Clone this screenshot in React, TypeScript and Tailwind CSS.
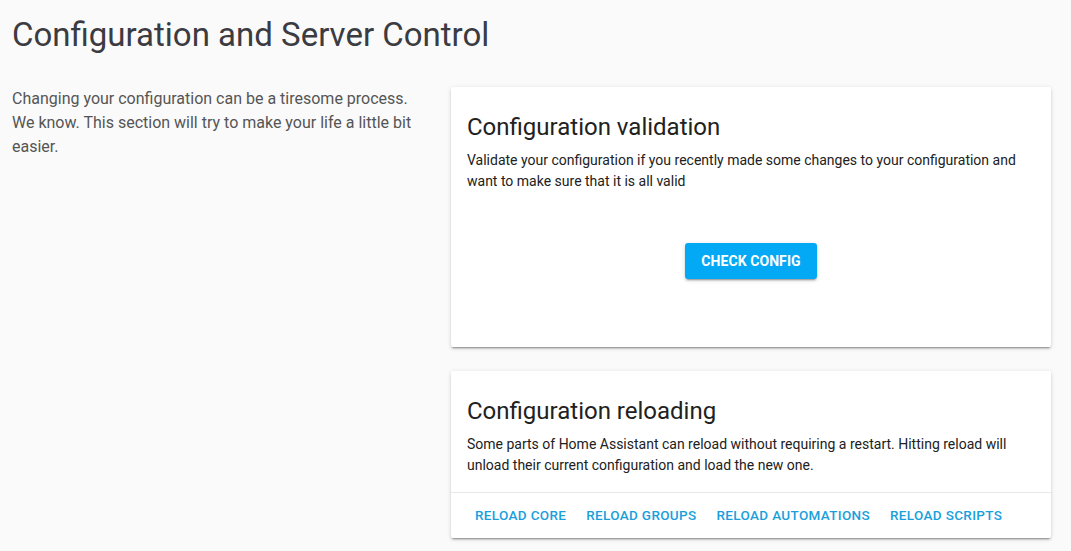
import React from "react";

const shadow =
  "shadow-[0_2px_2px_0_rgba(0,0,0,0.14),0_1px_5px_0_rgba(0,0,0,0.12),0_3px_1px_-2px_rgba(0,0,0,0.2)]";

const reloadActions = ["Reload Core", "Reload Groups", "Reload Automations", "Reload Scripts"];

export default function App() {
  return (
    <div className="min-h-screen bg-[#fafafa] font-['Roboto','Liberation_Sans',sans-serif]">
      <h1 className="px-3 pt-[15px] text-[33px] leading-[40px] font-normal text-[#3b3b42]">
        Configuration and Server Control
      </h1>

      <div className="flex pl-3 mt-8">
        <div className="w-[400px] mr-[39px] text-[16px] leading-[24px] text-[#555]">
          Changing your configuration can be a tiresome process. We know. This section will try
          to make your life a little bit easier.
        </div>

        <div className="w-[600px] flex flex-col gap-6">
          {/* validation card */}
          <div className={`bg-white rounded-[2px] ${shadow} px-4 pt-6 pb-[68px]`}>
            <h2 className="text-[24px] leading-[32px] font-normal text-[#212121]">
              Configuration validation
            </h2>
            <p className="mt-[7px] text-[14px] leading-[21px] text-[#212121]">
              Validate your configuration if you recently made some changes to your configuration
              and want to make sure that it is all valid
            </p>
            <div className="mt-[51px] flex justify-center">
              <button
                className={`h-9 w-[132px] whitespace-nowrap rounded-[3px] bg-[#03a9f4] text-white text-[14px] font-bold uppercase tracking-[0.005em] ${shadow}`}
              >
                Check Config
              </button>
            </div>
          </div>

          {/* reloading card */}
          <div className={`bg-white rounded-[2px] ${shadow}`}>
            <div className="px-4 pt-6 pb-4">
              <h2 className="text-[24px] leading-[32px] font-normal text-[#212121]">
                Configuration reloading
              </h2>
              <p className="mt-[7px] text-[14px] leading-[21px] text-[#212121]">
                Some parts of Home Assistant can reload without requiring a restart. Hitting reload
                will unload their current configuration and load the new one.
              </p>
            </div>
            <div className="flex border-t border-[#e8e8e8] pl-[14px] pt-1 pb-[5px]">
              {reloadActions.map((a) => (
                <button
                  key={a}
                  className="h-9 shrink-0 whitespace-nowrap px-[10px] text-[13.5px] font-medium uppercase tracking-[0.025em] text-[#1a9fdc]"
                >
                  {a}
                </button>
              ))}
            </div>
          </div>
        </div>
      </div>
    </div>
  );
}
